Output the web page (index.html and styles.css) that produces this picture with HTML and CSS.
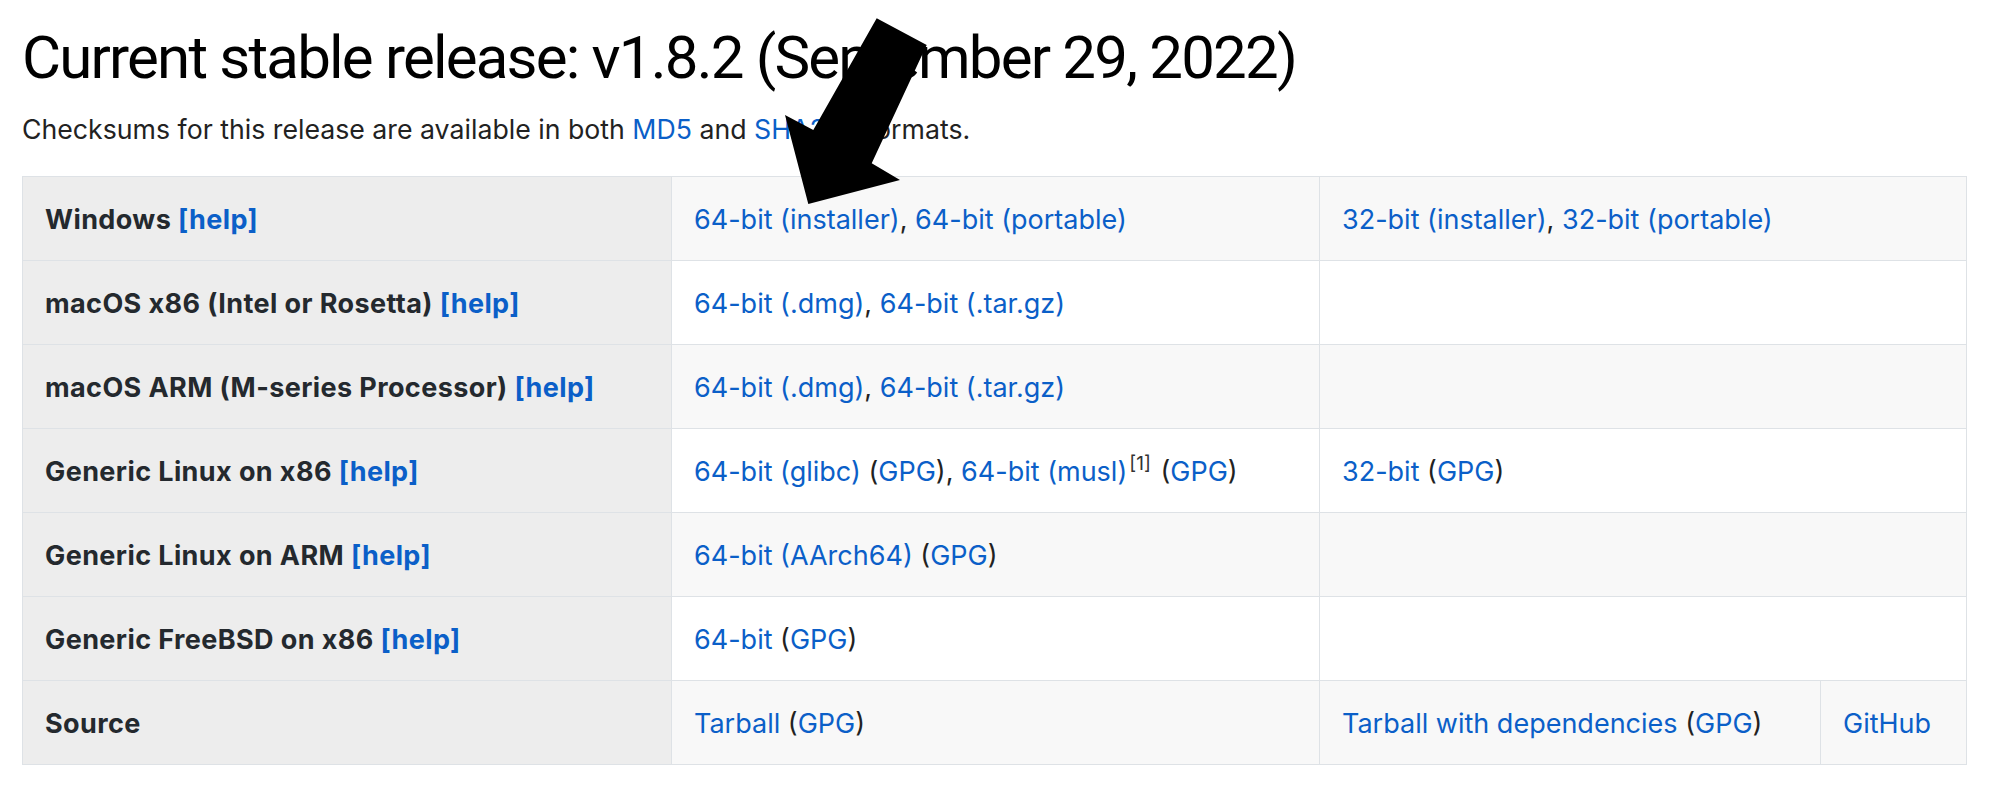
FILE: index.html
```html
<!DOCTYPE html>
<html lang="en">
<head>
<meta charset="utf-8">
<title>Current stable release</title>
<link rel="stylesheet" href="styles.css">
</head>
<body>
<main class="page">
  <h1 class="title">Current stable release: v1.8.2 (September 29, 2022)</h1>
  <p class="note">Checksums for this release are available in both <a href="#">MD5</a> and <a href="#">SHA256</a> formats.</p>
  <table class="downloads">
    <colgroup>
      <col class="c-os">
      <col class="c-main">
      <col class="c-alt">
      <col class="c-extra">
    </colgroup>
    <tbody>
      <tr>
        <th>Windows <a href="#">[help]</a></th>
        <td><a href="#">64-bit (installer)</a>, <a href="#">64-bit (portable)</a></td>
        <td colspan="2"><a href="#">32-bit (installer)</a>, <a href="#">32-bit (portable)</a></td>
      </tr>
      <tr>
        <th>macOS x86 (Intel or Rosetta) <a href="#">[help]</a></th>
        <td><a href="#">64-bit (.dmg)</a>, <a href="#">64-bit (.tar.gz)</a></td>
        <td colspan="2"></td>
      </tr>
      <tr>
        <th>macOS ARM (M-series Processor) <a href="#">[help]</a></th>
        <td><a href="#">64-bit (.dmg)</a>, <a href="#">64-bit (.tar.gz)</a></td>
        <td colspan="2"></td>
      </tr>
      <tr>
        <th>Generic Linux on x86 <a href="#">[help]</a></th>
        <td><a href="#">64-bit (glibc)</a> (<a href="#">GPG</a>), <a href="#">64-bit (musl)</a><sup class="ref">[1]</sup> (<a href="#">GPG</a>)</td>
        <td colspan="2"><a href="#">32-bit</a> (<a href="#">GPG</a>)</td>
      </tr>
      <tr>
        <th>Generic Linux on ARM <a href="#">[help]</a></th>
        <td><a href="#">64-bit (AArch64)</a> (<a href="#">GPG</a>)</td>
        <td colspan="2"></td>
      </tr>
      <tr>
        <th>Generic FreeBSD on x86 <a href="#">[help]</a></th>
        <td><a href="#">64-bit</a> (<a href="#">GPG</a>)</td>
        <td colspan="2"></td>
      </tr>
      <tr>
        <th>Source</th>
        <td><a href="#">Tarball</a> (<a href="#">GPG</a>)</td>
        <td><a href="#">Tarball with dependencies</a> (<a href="#">GPG</a>)</td>
        <td><a href="#">GitHub</a></td>
      </tr>
    </tbody>
  </table>
  <svg class="arrow" width="150" height="195" viewBox="0 0 150 195" aria-hidden="true">
    <polygon points="96.7,3.3 146.7,30 91.7,148.3 120,165 28.3,189 5,100 33.3,115" fill="#000"/>
  </svg>
</main>
</body>
</html>
```

FILE: styles.css
```css
html, body {
  margin: 0;
  padding: 0;
  background: #fff;
}

body {
  font-family: Inter, "Liberation Sans", Arial, sans-serif;
  color: #222;
}

.page {
  position: relative;
  padding: 22px 34px 0 22px;
}

.title {
  margin: 0 0 15px;
  font-family: Roboto, "Liberation Sans", Arial, sans-serif;
  font-size: 60px;
  font-weight: 400;
  line-height: 1.2;
  letter-spacing: -1.8px;
  color: #000;
}

.note {
  margin: 0 0 27px;
  font-size: 26.7px;
  line-height: 1.5;
  color: #222;
}

a {
  color: #0b5fc8;
  text-decoration: none;
}

.downloads {
  width: 1944px;
  border-collapse: collapse;
  table-layout: fixed;
  font-size: 27px;
  line-height: 40px;
}

.c-os { width: 649px; }
.c-main { width: 648px; }
.c-alt { width: 501px; }
.c-extra { width: 146px; }

.downloads th,
.downloads td {
  height: 80px;
  padding: 3px 22px 0;
  border: 1px solid #dee2e6;
  text-align: left;
  vertical-align: middle;
  white-space: nowrap;
}

.downloads th {
  background: #ededed;
  font-weight: 700;
  letter-spacing: 0.4px;
  color: #24292e;
}

.downloads td {
  color: #222;
}

.downloads tr:nth-child(odd) td {
  background: #f8f8f8;
}

.ref {
  font-size: 19px;
  line-height: 0;
  vertical-align: 11px;
  margin-left: 2px;
  margin-right: 2px;
  color: #333;
}

.arrow {
  position: absolute;
  left: 780px;
  top: 15px;
}
```
